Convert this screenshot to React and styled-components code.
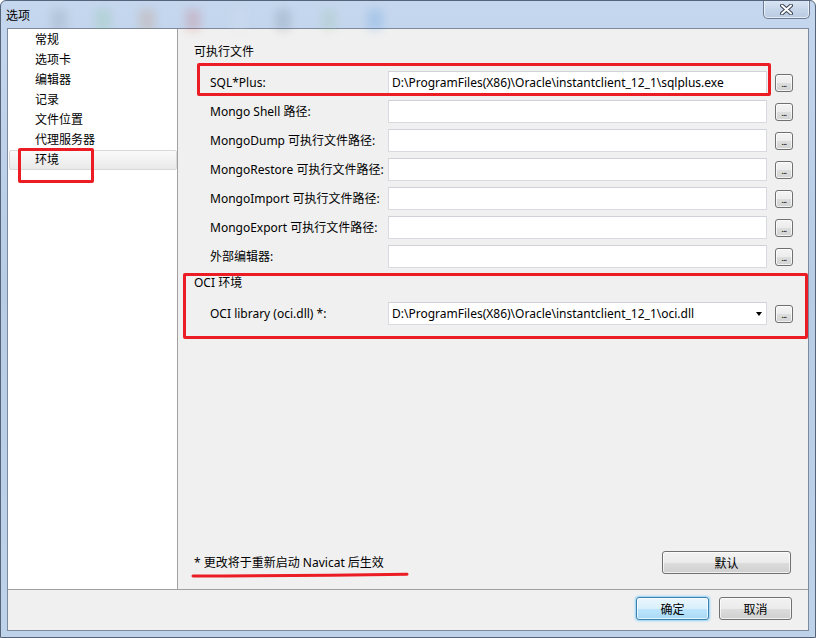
import styled, { createGlobalStyle } from "styled-components";

const GlobalStyle = createGlobalStyle`
  html, body {
    margin: 0;
    padding: 0;
  }
  body {
    background: #ffffff;
    font-family: "Noto Sans", "Noto Sans CJK SC", sans-serif;
    font-size: 12px;
    color: #000;
  }
`;

const Window = styled.div`
  position: relative;
  width: 816px;
  height: 638px;
  box-sizing: border-box;
  border: 1px solid #56647a;
  border-radius: 6px 6px 0 0;
  background: linear-gradient(180deg, #c5d7ee 0%, #b8cce6 45%, #bed2ea 100%);
  display: flex;
  flex-direction: column;
  overflow: hidden;
`;

const TitleBar = styled.div`
  position: relative;
  height: 27px;
  display: flex;
  align-items: flex-start;
  padding-left: 5px;
`;

const Glass = styled.div`
  position: absolute;
  top: 8px;
  width: 16px;
  height: 22px;
  border-radius: 4px;
  background: ${(p) => p.$color};
  opacity: 0.18;
  filter: blur(4px);
`;

const Title = styled.span`
  position: relative;
  line-height: 16px;
  margin-top: 7px;
`;

const CloseButton = styled.div`
  position: relative;
  margin-left: auto;
  margin-right: 5px;
  margin-top: -1px;
  width: 47px;
  height: 19px;
  box-sizing: border-box;
  border: 1px solid #6d7a8f;
  border-top: none;
  border-radius: 0 0 5px 5px;
  background: linear-gradient(180deg, #dbe6f4 0%, #c7d6ea 50%, #b9cbe3 100%);
  box-shadow: inset 0 0 0 1px rgba(255, 255, 255, 0.6);
  display: flex;
  align-items: center;
  justify-content: center;
`;

const Client = styled.div`
  flex: 1;
  margin: 0 6px 6px;
  border: 1px solid #7d8a9b;
  background: #f0f0f0;
  display: flex;
  flex-direction: column;
`;

const Main = styled.div`
  height: 560px;
  display: flex;
`;

const Tree = styled.ul`
  position: relative;
  flex-shrink: 0;
  width: 169px;
  margin: 0;
  padding: 1px 0 0;
  list-style: none;
  background: #fff;
  border-right: 1px solid #a0a0a0;
`;

const TreeItem = styled.li`
  height: 20px;
  padding-left: 25px;
  margin-left: 1px;
  box-sizing: border-box;
  border: 1px solid ${(p) => (p.$selected ? "#d9d9d9" : "transparent")};
  border-radius: 2px;
  background: ${(p) =>
    p.$selected ? "linear-gradient(180deg, #fafafa 0%, #e9e9e9 100%)" : "transparent"};
  line-height: 18px;
`;

const Mark = styled.div`
  position: absolute;
  box-sizing: border-box;
  border: 3px solid #ec1c24;
  border-radius: 2px;
  pointer-events: none;
`;

const Panel = styled.div`
  flex: 1;
  min-width: 0;
  display: flex;
  flex-direction: column;
  padding: 15px 14px 15px 16px;
`;

const Section = styled.section`
  position: relative;
  margin-top: ${(p) => p.$top || 0}px;
`;

const SectionTitle = styled.div`
  line-height: 16px;
`;

const Rows = styled.div`
  display: flex;
  flex-direction: column;
  gap: 6px;
  margin-top: 11px;
`;

const Row = styled.div`
  position: relative;
  display: grid;
  grid-template-columns: 170px 379px 18px;
  column-gap: 8px;
  align-items: center;
  padding-left: 16px;
  height: 23px;
`;

const Label = styled.label`
  white-space: nowrap;
  line-height: 16px;
`;

const Field = styled.div`
  position: relative;
  height: 23px;
  box-sizing: border-box;
  border: 1px solid #d8dadf;
  border-top-color: #cfd2d8;
  background: #fff;
  padding: 0 20px 0 3px;
  line-height: 21px;
  white-space: nowrap;
  overflow: hidden;
`;

const Arrow = styled.span`
  position: absolute;
  right: 4px;
  top: 9px;
  width: 0;
  height: 0;
  border-left: 3.5px solid transparent;
  border-right: 3.5px solid transparent;
  border-top: 4px solid #000;
`;

const DotsButton = styled.button`
  width: 18px;
  height: 18px;
  padding: 0;
  box-sizing: border-box;
  border: 1px solid #707070;
  border-radius: 3px;
  background: linear-gradient(180deg, #f4f4f4 0%, #ececec 50%, #dedede 51%, #d2d2d2 100%);
  box-shadow: inset 0 0 0 1px rgba(255, 255, 255, 0.7);
  font: bold 8px "Liberation Sans", sans-serif;
  line-height: 20px;
  color: #222;
  letter-spacing: -0.5px;
`;

const Bottom = styled.div`
  margin-top: auto;
  display: flex;
  align-items: center;
  justify-content: space-between;
`;

const Note = styled.span`
  position: relative;
  line-height: 16px;
`;

const Underline = styled.svg`
  position: absolute;
  left: -3px;
  top: 17px;
  overflow: visible;
`;

const Button = styled.button`
  width: ${(p) => p.$width || 73}px;
  height: 23px;
  padding: 0;
  box-sizing: border-box;
  border: 1px solid ${(p) => (p.$primary ? "#3c7fb1" : "#707070")};
  border-radius: 3px;
  background: ${(p) =>
    p.$primary
      ? "linear-gradient(180deg, #eaf6fd 0%, #d9f0fc 50%, #bee6fd 51%, #a7d9f5 100%)"
      : "linear-gradient(180deg, #f2f2f2 0%, #ebebeb 50%, #dddddd 51%, #cfcfcf 100%)"};
  box-shadow: ${(p) =>
    p.$primary
      ? "inset 0 0 0 1px rgba(255,255,255,0.7), 0 0 2px 1px #8fd3f5"
      : "inset 0 0 0 1px rgba(255,255,255,0.7)"};
  font-family: "Noto Sans", "Noto Sans CJK SC", sans-serif;
  font-size: 12px;
  color: #000;
  margin-right: ${(p) => p.$mr || 0}px;
`;

const Footer = styled.div`
  flex: 1;
  border-top: 1px solid #a0a0a0;
  display: flex;
  justify-content: flex-end;
  align-items: flex-start;
  gap: 10px;
  padding: 7px 16px 0 0;
`;

const treeItems = ["常规", "选项卡", "编辑器", "记录", "文件位置", "代理服务器", "环境"];

const execRows = [
  { label: "SQL*Plus:", value: "D:\\ProgramFiles(X86)\\Oracle\\instantclient_12_1\\sqlplus.exe" },
  { label: "Mongo Shell 路径:" },
  { label: "MongoDump 可执行文件路径:" },
  { label: "MongoRestore 可执行文件路径:" },
  { label: "MongoImport 可执行文件路径:" },
  { label: "MongoExport 可执行文件路径:" },
  { label: "外部编辑器:" },
];

const blobs = [
  { left: 50, color: "#6f7d8f" },
  { left: 94, color: "#6fbf7a" },
  { left: 138, color: "#c0763a" },
  { left: 184, color: "#d04a4a" },
  { left: 230, color: "#dfe7f2" },
  { left: 274, color: "#58667a" },
  { left: 320, color: "#8fbf8f" },
  { left: 366, color: "#3a86d8" },
];

const App = () => {
  return (
    <>
      <GlobalStyle />
      <Window>
        <TitleBar>
          {blobs.map((b, i) => (
            <Glass key={i} $color={b.color} style={{ left: b.left }} />
          ))}
          <Title>选项</Title>
          <CloseButton>
            <svg width="13" height="11" viewBox="0 0 13 11">
              <path d="M2 1.5 L11 9.5 M11 1.5 L2 9.5" stroke="#3b4352" strokeWidth="4" strokeLinecap="round" />
              <path d="M2 1.5 L11 9.5 M11 1.5 L2 9.5" stroke="#fff" strokeWidth="2" strokeLinecap="round" />
            </svg>
          </CloseButton>
        </TitleBar>
        <Client>
          <Main>
            <Tree>
              {treeItems.map((item) => (
                <TreeItem key={item} $selected={item === "环境"}>
                  {item}
                </TreeItem>
              ))}
              <Mark style={{ left: 10, top: 119, width: 76, height: 35 }} />
            </Tree>
            <Panel>
              <Section>
                <SectionTitle>可执行文件</SectionTitle>
                <Rows>
                  {execRows.map((row, i) => (
                    <Row key={row.label}>
                      <Label>{row.label}</Label>
                      <Field>{row.value}</Field>
                      <DotsButton>...</DotsButton>
                      {i === 0 && <Mark style={{ left: 3, top: -8, width: 574, height: 33 }} />}
                    </Row>
                  ))}
                </Rows>
              </Section>
              <Section $top={7}>
                <SectionTitle>OCI 环境</SectionTitle>
                <Rows>
                  <Row>
                    <Label>OCI library (oci.dll) *:</Label>
                    <Field>
                      D:\ProgramFiles(X86)\Oracle\instantclient_12_1\oci.dll
                      <Arrow />
                    </Field>
                    <DotsButton>...</DotsButton>
                  </Row>
                </Rows>
                <Mark style={{ left: -11, top: -2, width: 625, height: 66 }} />
              </Section>
              <Bottom>
                <Note>
                  * 更改将于重新启动 Navicat 后生效
                  <Underline width="218" height="6" viewBox="0 0 218 6">
                    <path d="M2 4 Q110 3.6 216 2.2" stroke="#ec1c24" strokeWidth="3" fill="none" strokeLinecap="round" />
                  </Underline>
                </Note>
                <Button $width={129} $mr={3}>
                  默认
                </Button>
              </Bottom>
            </Panel>
          </Main>
          <Footer>
            <Button $primary>确定</Button>
            <Button>取消</Button>
          </Footer>
        </Client>
      </Window>
    </>
  );
};

export default App;
